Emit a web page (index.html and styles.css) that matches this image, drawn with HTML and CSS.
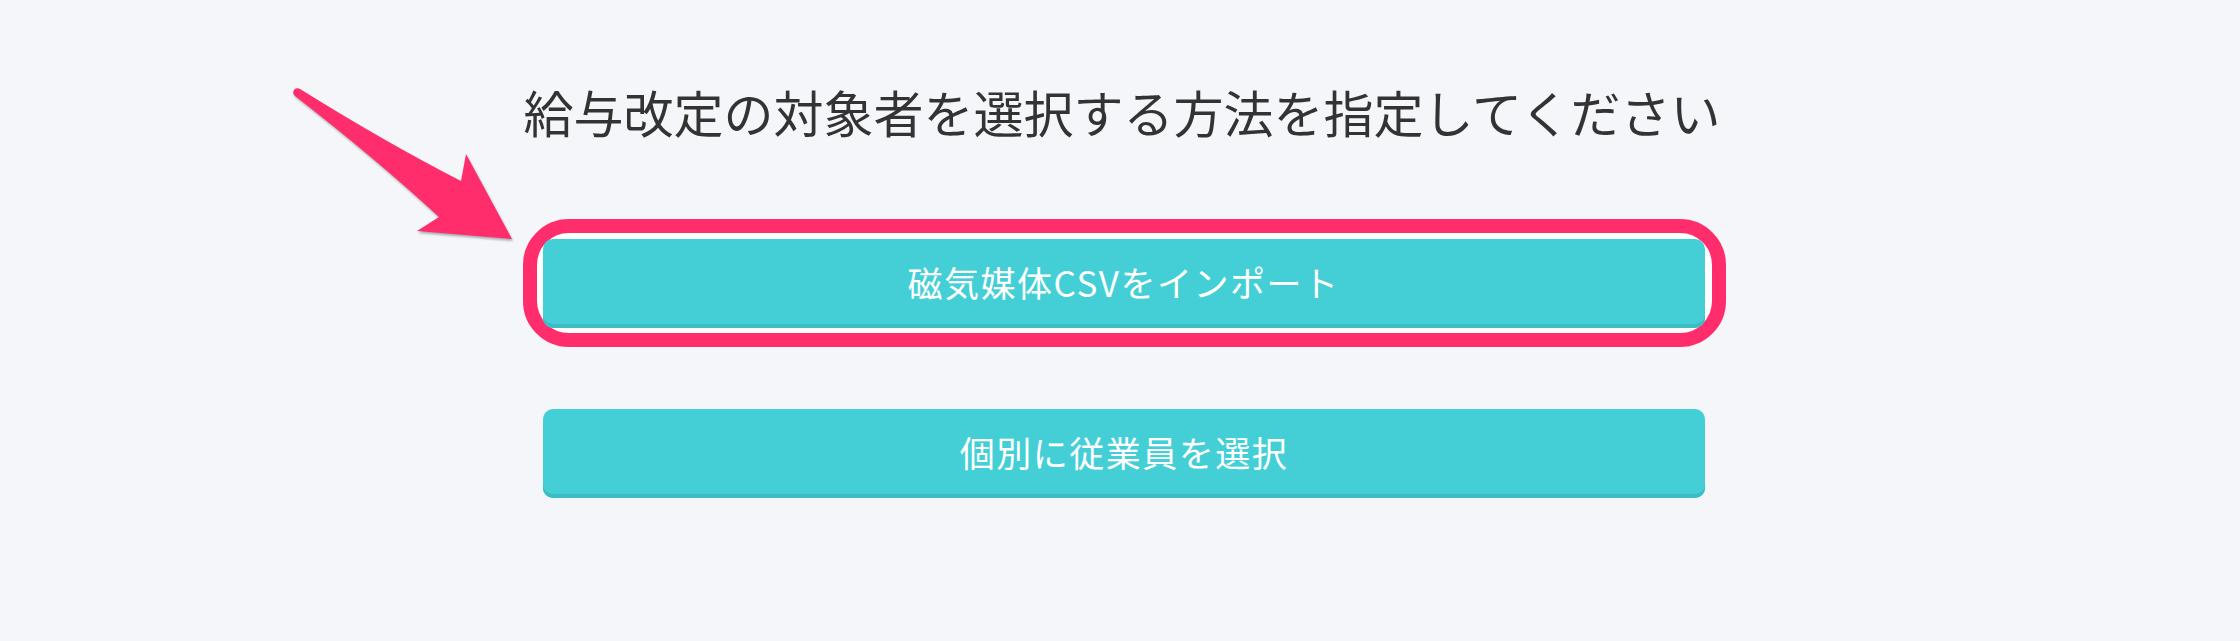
FILE: index.html
```html
<!DOCTYPE html>
<html lang="ja">
<head>
<meta charset="utf-8">
<title>給与改定</title>
<link rel="stylesheet" href="styles.css">
</head>
<body>
<main class="page">
  <h1 class="title">給与改定の対象者を選択する方法を指定してください</h1>
  <div class="choices">
    <div class="ring">
      <button class="btn" type="button">磁気媒体CSVをインポート</button>
    </div>
    <button class="btn btn-plain" type="button">個別に従業員を選択</button>
  </div>
  <svg class="arrow" width="240" height="180" viewBox="0 0 240 180" aria-hidden="true">
    <path d="M20,9 Q105,62 181,101 L186,74 L232,159 L137,151 L159,137 Q95,78 15,16 A3.6,3.6 0 0 1 20,9 Z" fill="#ff2d6b"/>
  </svg>
</main>
</body>
</html>
```
FILE: styles.css
```css
html, body {
  margin: 0;
  padding: 0;
}
body {
  background: #f4f6fa;
  font-family: "Noto Sans CJK JP", "Noto Sans", sans-serif;
  width: 2240px;
  height: 641px;
  overflow: hidden;
}
.page {
  position: relative;
  display: flex;
  flex-direction: column;
  align-items: center;
  padding-left: 8px;
  height: 641px;
  box-sizing: border-box;
}
.title {
  margin: 86px 0 0 -4px;
  font-size: 50px;
  line-height: 50px;
  font-weight: 400;
  color: #333;
  letter-spacing: 0;
}
.choices {
  margin-top: 83px;
  display: flex;
  flex-direction: column;
  align-items: center;
  gap: 62px;
}
.ring {
  border: 14px solid #ff2d6b;
  border-radius: 46px;
  background: #fff;
  padding: 6px 7px 5px 6px;
  display: flex;
}
.btn {
  width: 1162px;
  height: 89px;
  border: none;
  border-radius: 10px;
  background: #44cfd7;
  box-shadow: inset 0 -4px 0 #3cbcc4;
  color: #fff;
  font-family: "Noto Sans CJK JP", "Noto Sans", sans-serif;
  font-size: 35px;
  letter-spacing: 1.5px;
  padding: 0 0 4px 0;
  margin: 0;
  cursor: pointer;
}
.arrow {
  position: absolute;
  left: 280px;
  top: 80px;
  filter: drop-shadow(1px 2px 1px rgba(0, 0, 0, 0.3));
}
```
